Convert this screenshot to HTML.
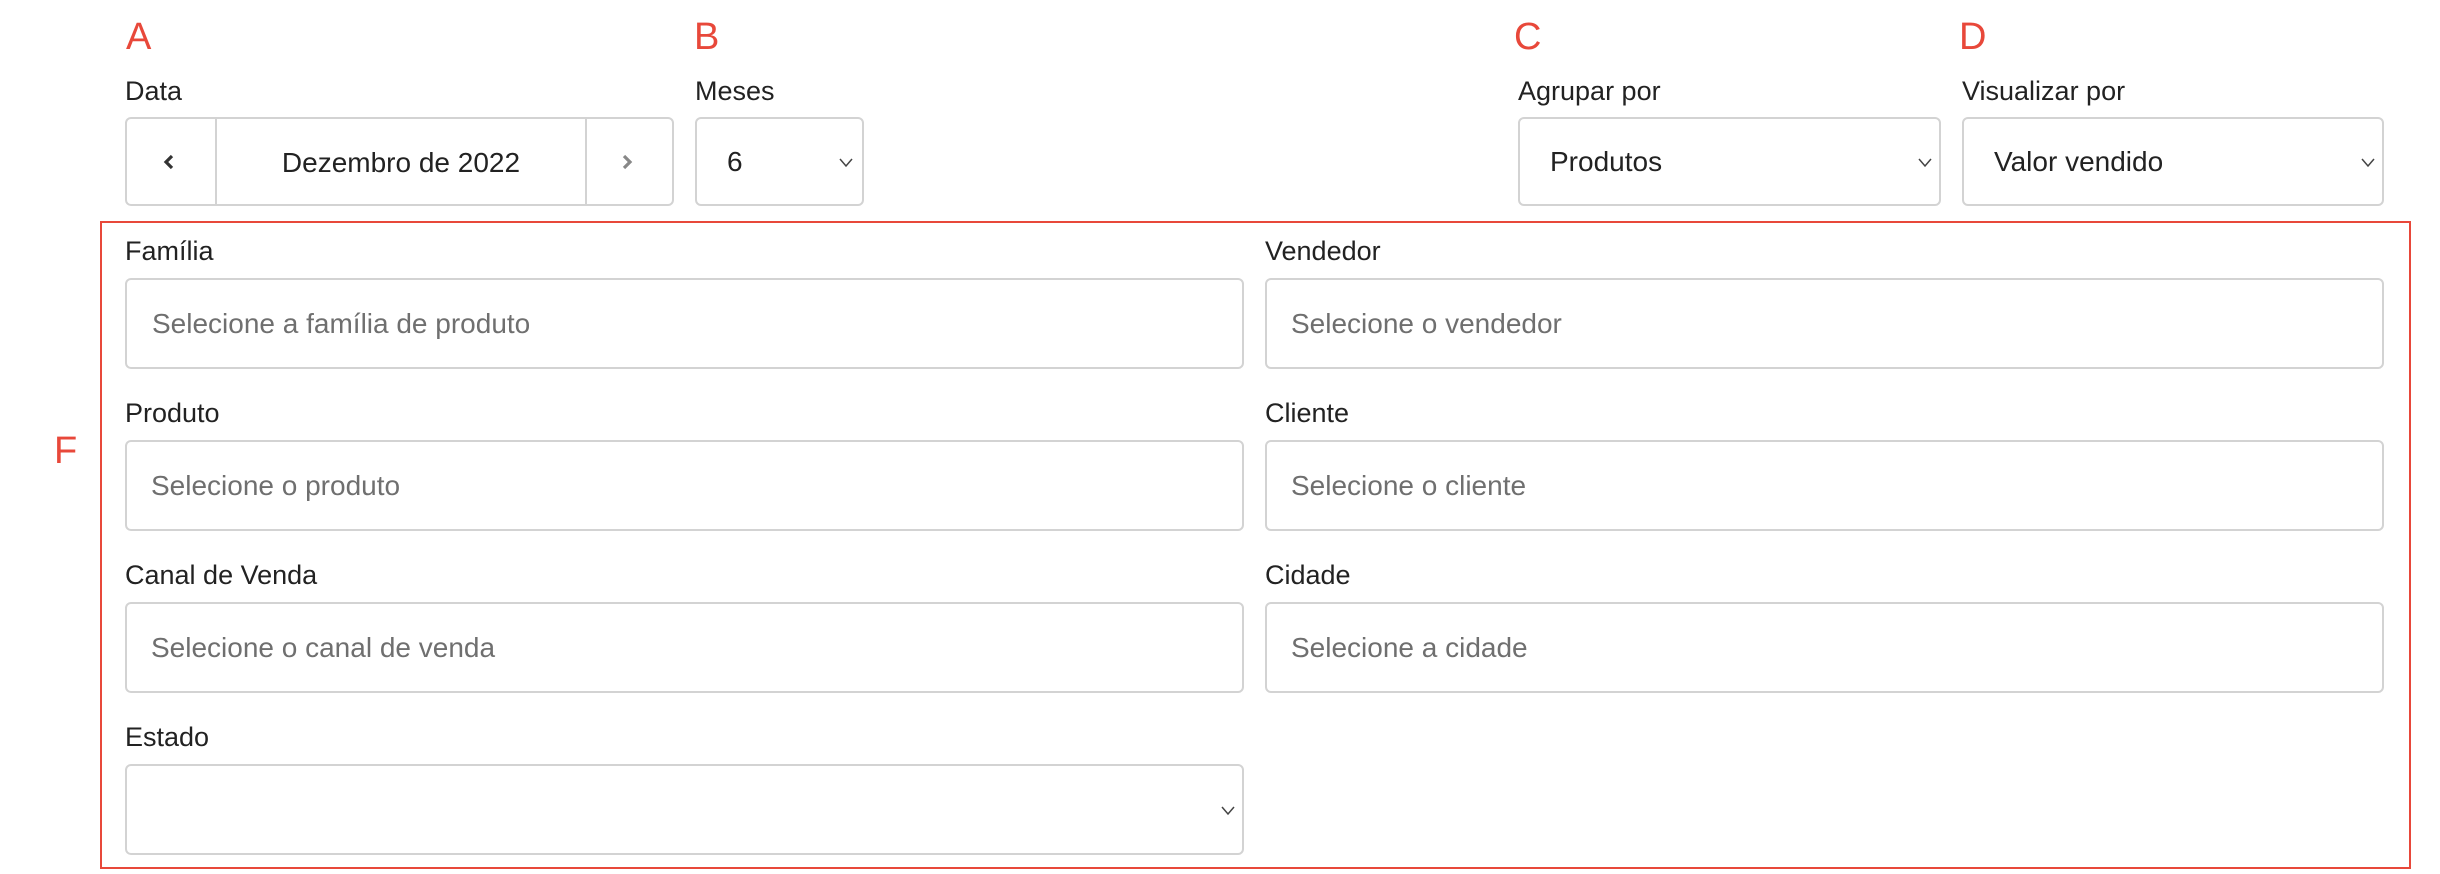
<!DOCTYPE html>
<html><head><meta charset="utf-8"><style>
body{margin:0;width:2440px;height:874px;background:#fff;font-family:"Liberation Sans",sans-serif;color:#222;position:relative;overflow:hidden}
.a{position:absolute}
.L{position:absolute;font-size:38px;color:#e8483a;line-height:1}
.lb{position:absolute;font-size:27px;line-height:1;color:#222}
.box{position:absolute;border:2px solid #d3d3d3;border-radius:6px;box-sizing:border-box;background:#fff}
.ph{position:absolute;left:24px;top:50%;transform:translateY(-50%);font-size:28px;color:#6f6f6f;white-space:nowrap}
.val{position:absolute;left:30px;top:50%;transform:translateY(-50%);font-size:28px;color:#222;white-space:nowrap}
.chev{position:absolute;right:6px;top:50%;margin-top:-6px}
</style></head><body>
<div class="L" style="left:126px;top:18px">A</div>
<div class="L" style="left:694px;top:18px">B</div>
<div class="L" style="left:1514px;top:18px">C</div>
<div class="L" style="left:1959px;top:18px">D</div>
<div class="L" style="left:54px;top:432px">F</div>

<div class="lb" style="left:125px;top:78px">Data</div>
<div class="lb" style="left:695px;top:78px">Meses</div>
<div class="lb" style="left:1518px;top:78px">Agrupar por</div>
<div class="lb" style="left:1962px;top:78px">Visualizar por</div>

<div class="box" style="left:125px;top:117px;width:549px;height:89px">
 <div class="a" style="left:88px;top:0;bottom:0;border-left:2px solid #d3d3d3"></div>
 <div class="a" style="left:458px;top:0;bottom:0;border-left:2px solid #d3d3d3"></div>
 <svg class="a" style="left:36px;top:35px" width="12" height="16" viewBox="0 0 12 16"><path d="M9 2L3 8l6 6" fill="none" stroke="#333" stroke-width="3.2"/></svg>
 <svg class="a" style="left:494px;top:35px" width="12" height="16" viewBox="0 0 12 16"><path d="M3 2l6 6-6 6" fill="none" stroke="#888" stroke-width="3.2"/></svg>
 <div class="a" style="left:90px;width:368px;top:28px;text-align:center;font-size:28px">Dezembro de 2022</div>
</div>
<div class="box" style="left:695px;top:117px;width:169px;height:89px">
 <div class="val" style="left:30px">6</div>
 <svg class="chev" width="16" height="12" viewBox="0 0 16 12" style="right:8px"><path d="M2 3l6 7 6-7" fill="none" stroke="#444" stroke-width="1.5"/></svg>
</div>
<div class="box" style="left:1518px;top:117px;width:423px;height:89px">
 <div class="val">Produtos</div>
 <svg class="chev" width="16" height="12" viewBox="0 0 16 12"><path d="M2 3l6 7 6-7" fill="none" stroke="#444" stroke-width="1.5"/></svg>
</div>
<div class="box" style="left:1962px;top:117px;width:422px;height:89px">
 <div class="val">Valor vendido</div>
 <svg class="chev" width="16" height="12" viewBox="0 0 16 12"><path d="M2 3l6 7 6-7" fill="none" stroke="#444" stroke-width="1.5"/></svg>
</div>

<div class="a" style="left:100px;top:221px;width:2311px;height:648px;border:2px solid #e8483a;box-sizing:border-box"></div>

<div class="lb" style="left:125px;top:238px">Família</div>
<div class="lb" style="left:1265px;top:238px">Vendedor</div>
<div class="box" style="left:125px;top:278px;width:1119px;height:91px"><div class="ph" style="left:25px">Selecione a família de produto</div></div>
<div class="box" style="left:1265px;top:278px;width:1119px;height:91px"><div class="ph">Selecione o vendedor</div></div>

<div class="lb" style="left:125px;top:400px">Produto</div>
<div class="lb" style="left:1265px;top:400px">Cliente</div>
<div class="box" style="left:125px;top:440px;width:1119px;height:91px"><div class="ph">Selecione o produto</div></div>
<div class="box" style="left:1265px;top:440px;width:1119px;height:91px"><div class="ph">Selecione o cliente</div></div>

<div class="lb" style="left:125px;top:562px">Canal de Venda</div>
<div class="lb" style="left:1265px;top:562px">Cidade</div>
<div class="box" style="left:125px;top:602px;width:1119px;height:91px"><div class="ph">Selecione o canal de venda</div></div>
<div class="box" style="left:1265px;top:602px;width:1119px;height:91px"><div class="ph">Selecione a cidade</div></div>

<div class="lb" style="left:125px;top:724px">Estado</div>
<div class="box" style="left:125px;top:764px;width:1119px;height:91px">
 <svg class="chev" width="16" height="12" viewBox="0 0 16 12"><path d="M2 3l6 7 6-7" fill="none" stroke="#444" stroke-width="1.5"/></svg>
</div>
</body></html>
